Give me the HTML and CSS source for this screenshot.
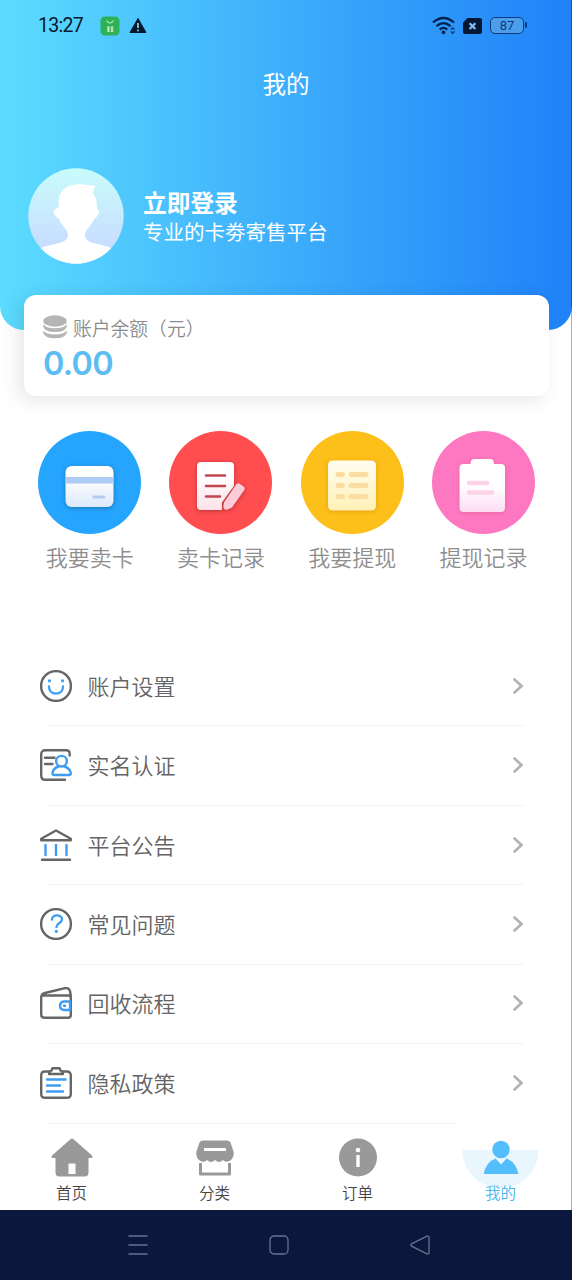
FILE: index.html
```
<!DOCTYPE html>
<html lang="zh-CN">
<head>
<meta charset="utf-8">
<title>我的</title>
<link rel="stylesheet" href="styles.css">
</head>
<body>
<div class="phone">
  <header class="header">
    <div class="status">
      <span class="clock">13:27</span>
      <svg class="app-icon" width="20" height="20" viewBox="0 0 20 20"><rect x=".5" y=".5" width="19" height="19" rx="4.5" fill="#2fb257"/><path d="M6.500 4.500Q10 9.500 13.500 4.500" fill="none" stroke="#b9f0b4" stroke-width="1.200"/><path d="M7 11.200h2.700M10.600 11.200h2.700M7 13.200h2.700M10.600 13.200h2.700M7 15.200h2.700M10.600 15.200h2.700M8.400 10.500v5.500M12 10.500v5.500" stroke="#d9f7cf"/></svg>
      <svg class="warn-icon" width="18" height="17" viewBox="0 0 18 17"><path d="M9 1.500L17 15.500H1z" fill="#06182b" stroke="#06182b" stroke-linejoin="round"/><path d="M9 6v5M9 12.500v1.800" stroke="#8fd0f2" stroke-width="1.700"/></svg>
      <div class="status-right">
        <svg width="24" height="20" viewBox="0 0 24 20"><g fill="none" stroke="#061f4b" stroke-width="2.300"><path d="M1 6.500Q11.500-2.500 22 6.500"/><path d="M4.500 10.200Q11.500 4 18.500 10.200"/><path d="M7.700 13.600Q11.500 10.200 15.300 13.600"/></g><circle cx="11.500" cy="16.400" r="1.800" fill="#061f4b"/><path d="M18 13.500L20.700 10.800 23.400 13.500zM18 15.500L20.700 18.200 23.400 15.500z" fill="#123a78"/></svg>
        <svg class="sim" width="19" height="16" viewBox="0 0 19 16"><path d="M4.500 0H17q2 0 2 2V14q0 2-2 2H2Q0 16 0 14V4.500z" fill="#061733"/><path d="M6.600 5.200l5.800 5.800M12.400 5.200L6.600 11" stroke="#84bdf6" stroke-width="2.200"/></svg>
        <span class="battery">87</span>
      </div>
    </div>
    <h1 class="title">我的</h1>
    <div class="profile">
      <svg width="96" height="96" viewBox="0 0 96 96"><defs><linearGradient id="av" x1="0" y1="0" x2="0" y2="1"><stop offset="0" stop-color="#c8fcfb"/><stop offset=".85" stop-color="#c8dcff"/></linearGradient><clipPath id="avc"><circle cx="48" cy="48" r="47.700"/></clipPath></defs><g clip-path="url(#avc)"><rect width="96" height="96" fill="url(#av)"/><path d="M31 36C29 24 38 17 48 16.500C56 15.500 62 18.500 67 17C67 21 65 24 64.500 25C69 29 69 36 69 41C73 42 71 48 66 51C63 59 57 61 57 67C57 77 75 75 85 81V97H11V81C22 75 40 77 40 67C40 61 34 59 31 51C26 48 23 42 28 41C30 40 31 39 31 36Z" fill="#fff"/></g></svg>
      <div class="profile-text">
        <div class="login">立即登录</div>
        <div class="slogan">专业的卡劵寄售平台</div>
      </div>
    </div>
  </header>

  <section class="balance">
    <div class="balance-label">
      <svg width="24" height="24" viewBox="0 0 24 24" fill="#b5b5b5"><ellipse cx="12" cy="6" rx="11.700" ry="5.700"/><path d="M.3 9.200Q3 13.300 12 13.300T23.700 9.200V12Q22 17 12 17T.3 12zM.3 15.500Q3 19.500 12 19.500T23.700 15.500V18Q22 23.300 12 23.300T.3 18z"/></svg>
      <span>账户余额（元）</span>
    </div>
    <div class="amount">0.00</div>
  </section>

  <nav class="actions">
    <a class="action">
      <svg width="103" height="103" viewBox="0 0 103 103"><defs><linearGradient id="w1" x1="0" y1="0" x2="0" y2="1"><stop offset=".3" stop-color="#fff"/><stop offset="1" stop-color="#dce8fb"/></linearGradient></defs><circle cx="51.500" cy="51.500" r="51.500" fill="#25a5fd"/><g class="lift"><rect x="27.500" y="35" width="48" height="41" rx="6" fill="url(#w1)"/></g><path d="M27.500 46h48v6.500h-48z" fill="#b0cbf4"/><path d="M56 66h10" stroke="#b0cbee" stroke-width="3" stroke-linecap="round"/></svg>
      <span>我要卖卡</span>
    </a>
    <a class="action">
      <svg width="103" height="103" viewBox="0 0 103 103"><defs><linearGradient id="w2" x1="0" y1="0" x2="0" y2="1"><stop offset=".3" stop-color="#fff"/><stop offset="1" stop-color="#fde1e8"/></linearGradient></defs><circle cx="51.500" cy="51.500" r="51.500" fill="#ff4d50"/><g class="lift"><path d="M32 31h29q4 0 4 4V55L53 71.500V79H32q-4 0-4-4V35q0-4 4-4z" fill="url(#w2)"/></g><path class="lift" d="M67.500 53Q66 55 55 71.500L54.300 76Q55 79.500 58 78.700L63 76.500 75.300 59Q76.500 56.500 74 55L71 53Q69 51.700 67.500 53z" fill="#ffcbd8"/><path d="M37 44.500h19M37 55h19M37 65.500h14" stroke="#c34550" stroke-width="2.600" stroke-linecap="round"/></svg>
      <span>卖卡记录</span>
    </a>
    <a class="action">
      <svg width="103" height="103" viewBox="0 0 103 103"><defs><linearGradient id="w3" x1="0" y1="0" x2="0" y2="1"><stop offset="0" stop-color="#fffdf1"/><stop offset="1" stop-color="#fff1b7"/></linearGradient></defs><circle cx="51.500" cy="51.500" r="51.500" fill="#fdbf19"/><g class="lift-soft"><rect x="27" y="29.500" width="48" height="50" rx="4.500" fill="url(#w3)"/></g><path d="M37 43.500h4.500M50 43.500h15M37 54.500h4.500M50 54.500h15M37 65.500h4.500M50 65.500h15" stroke="#fcdda1" stroke-width="5" stroke-linecap="round"/></svg>
      <span>我要提现</span>
    </a>
    <a class="action">
      <svg width="103" height="103" viewBox="0 0 103 103"><defs><linearGradient id="w4" x1="0" y1="0" x2="0" y2="1"><stop offset=".5" stop-color="#fff"/><stop offset="1" stop-color="#fddcf3"/></linearGradient></defs><circle cx="51.500" cy="51.500" r="51.500" fill="#fd78c1"/><g class="lift-soft"><path d="M31.500 33h7q0-5 4-5H58q4 0 4 5h7q4 0 4 4V77q0 4-4 4H31.500q-4 0-4-4V37q0-4 4-4z" fill="url(#w4)"/></g><path d="M37 52h18M37 61.500h23" stroke="#fcd3e7" stroke-width="4.500" stroke-linecap="round"/></svg>
      <span>提现记录</span>
    </a>
  </nav>

  <main class="menu">
    <div class="row">
      <svg class="icon" viewBox="0 0 32 32"><circle cx="16" cy="16" r="14.900"/><path class="blue" d="M9 16.500C9 26 23 26 23 16.500"/><path class="blue dot" d="M9.500 10.800h.01M22.500 10.800h.01"/></svg>
      <span>账户设置</span><svg class="chev" viewBox="0 0 10 16"><path d="M1.500 1.500L8.500 8 1.500 14.500"/></svg>
    </div>
    <div class="row">
      <svg class="icon" viewBox="0 0 32 32"><path d="M29.700 6.500V5Q29.700 1.200 26 1.200H5.500Q1.200 1.200 1.200 5.500V26.500Q1.200 30.800 5.500 30.800H25M5 8.800h9.500M5 15h7.500"/><circle class="blue" cx="21.500" cy="12.200" r="5.300"/><path class="blue" d="M18.500 17.500Q13 19.500 12.500 24Q12.500 26 14.500 26H29Q31 26 30.800 24Q30 19.500 24.500 17.500"/></svg>
      <span>实名认证</span><svg class="chev" viewBox="0 0 10 16"><path d="M1.500 1.500L8.500 8 1.500 14.500"/></svg>
    </div>
    <div class="row">
      <svg class="icon" viewBox="0 0 32 32"><path d="M1.200 11.200V9.700L16 1.500 30.800 9.700V11.200zM2 30.800H30"/><path class="blue" d="M5.500 16V26M16 16V26M26.500 16V26"/></svg>
      <span>平台公告</span><svg class="chev" viewBox="0 0 10 16"><path d="M1.500 1.500L8.500 8 1.500 14.500"/></svg>
    </div>
    <div class="row">
      <svg class="icon" viewBox="0 0 32 32"><circle cx="16" cy="16" r="14.900"/><path class="blue" d="M12 11.500C12 6 22 6 22 11.500C22 15 16.500 15 16.500 19"/><path class="blue dot" d="M16.300 23.300h.01"/></svg>
      <span>常见问题</span><svg class="chev" viewBox="0 0 10 16"><path d="M1.500 1.500L8.500 8 1.500 14.500"/></svg>
    </div>
    <div class="row">
      <svg class="icon" viewBox="0 0 32 32"><path d="M1.200 10.500Q1.200 7 5 6L25 1.200Q29 .5 30 4L30.800 9V28Q30.800 30.800 28 30.800H4.500Q1.200 30.800 1.200 27.500zM2 8.500H28.500Q30.800 8.500 30.800 11"/><path class="blue" d="M30 14.500H24Q20 15 20 18.700T24 23H30V14.500"/><path class="blue" d="M24 18.700H25"/></svg>
      <span>回收流程</span><svg class="chev" viewBox="0 0 10 16"><path d="M1.500 1.500L8.500 8 1.500 14.500"/></svg>
    </div>
    <div class="row">
      <svg class="icon" viewBox="0 0 32 32"><path d="M9.500 4.500H5Q1.200 4.500 1.200 8.500V27Q1.200 30.800 5 30.800H27Q30.800 30.800 30.800 27V8.500Q30.800 4.500 27 4.500H22.500M9 7Q9.500 4.500 11.500 3.500L12.500 1.200H19.500L20.500 3.500Q22.500 4.500 23 7z"/><path class="blue" d="M7 12.500H25.500M7 18.500H20M7 24.500H23"/></svg>
      <span>隐私政策</span><svg class="chev" viewBox="0 0 10 16"><path d="M1.500 1.500L8.500 8 1.500 14.500"/></svg>
    </div>
  </main>

  <footer class="tabs">
    <a class="tab">
      <svg width="42" height="40" viewBox="0 0 42 40" fill="#999"><path d="M19.500 1.200Q21 0 22.500 1.200L41 17.500Q42.500 20 40 20H37.500V34.500Q37.500 38.500 33.500 38.500H8.500Q4.500 38.500 4.500 34.500V20H2Q-.5 20 1 17.500z"/><path d="M17.500 25.500h7V36h-7z" fill="#fff"/></svg>
      <span>首页</span>
    </a>
    <a class="tab">
      <svg width="42" height="40" viewBox="0 0 42 40"><path d="M9 2.500H33Q35.500 2.500 36.500 4.500L39.700 14C40.500 22 33 26.500 29 22Q25 26 21 22Q17 26 13 22C9 26.500 1.500 22 2.300 14L5.500 4.500Q6.500 2.500 9 2.500z" fill="#999"/><path d="M10 11.500H32" stroke="#fff" stroke-width="3"/><path d="M6.500 25V36H35.500V25" fill="none" stroke="#999" stroke-width="3" stroke-linejoin="round"/></svg>
      <span>分类</span>
    </a>
    <a class="tab">
      <svg width="42" height="40" viewBox="0 0 42 40"><circle cx="21" cy="19.500" r="19" fill="#999"/><circle cx="21" cy="12" r="2.300" fill="#fff"/><path d="M19.300 17h3.400V29h-3.400z" fill="#fff"/></svg>
      <span>订单</span>
    </a>
    <a class="tab active">
      <svg width="76" height="40" viewBox="0 0 76 40"><circle cx="38" cy="11.500" r="8.700" fill="#54bdfc"/><path d="M20.700 36Q23 24 32.500 20.500L38 26.500 43.500 20.500Q53 24 55.500 36z" fill="#54bdfc"/></svg>
      <span>我的</span>
    </a>
  </footer>

  <div class="sysnav">
    <svg width="20" height="20" viewBox="0 0 20 20"><path d="M.5 1H19.500M.5 10H19.500M.5 19H19.500"/></svg>
    <svg width="20" height="20" viewBox="0 0 20 20"><rect x="1" y="1" width="18" height="18" rx="4"/></svg>
    <svg width="20" height="20" viewBox="0 0 20 20"><path d="M1.500 8.800L17 1.200Q19 .5 19 2.800V17.200Q19 19.500 17 18.800L1.500 11.200Q.2 10 1.500 8.800z"/></svg>
  </div>
</div>
</body>
</html>
```
FILE: styles.css
```
* { box-sizing: border-box; }
body {
  margin: 0;
  background: #fff;
  font-family: "Noto Sans CJK SC", "Noto Sans", sans-serif;
  font-weight: 350;
}
svg { display: block; flex: none; }
.phone {
  position: relative;
  width: 572px;
  height: 1280px;
  display: flex;
  flex-direction: column;
  overflow: hidden;
}
.phone::after {
  content: "";
  position: absolute;
  top: 0;
  right: 0;
  width: 1px;
  height: 1210px;
  background: rgba(0, 0, 0, .32);
}
.header {
  height: 330px;
  flex: none;
  border-radius: 0 0 24px 24px;
  background: linear-gradient(90deg, #5cdcff 0%, #3cacfb 52%, #1f82f8 100%);
  color: #fff;
}
.status {
  height: 51px;
  display: flex;
  align-items: center;
  padding: 0 48px 0 38px;
  color: #06182b;
}
.clock {
  width: 62px;
  font: 400 19.500px/22px Roboto, sans-serif;
  letter-spacing: -.7px;
}
.warn-icon { margin-left: 9px; }
.status-right {
  margin-left: auto;
  display: flex;
  align-items: center;
}
.sim { margin-left: 7px; }
.battery {
  position: relative;
  width: 34px;
  height: 17px;
  margin-left: 8px;
  border: 1.5px solid #0d397e;
  border-radius: 5px;
  background: #4d9eea;
  font: 400 13px/15px Roboto, sans-serif;
  color: #0d397e;
  text-align: center;
}
.battery::after {
  content: "";
  position: absolute;
  right: -4px;
  top: 4px;
  width: 2px;
  height: 6px;
  border-radius: 1px;
  background: #0d397e;
}
.title {
  margin: 0;
  height: 64px;
  font-size: 23.500px;
  line-height: 64px;
  font-weight: 400;
  text-align: center;
}
.profile {
  display: flex;
  margin-top: 53px;
  padding-left: 28px;
  gap: 19px;
}
.profile-text { padding-top: 19px; }
.login { font-size: 23.700px; line-height: 30px; font-weight: 700; }
.slogan { font-size: 20.500px; line-height: 28px; font-weight: 400; }
.balance {
  position: relative;
  flex: none;
  width: 525px;
  height: 101px;
  margin: -35px 0 0 24px;
  padding: 19px 19px 0;
  border-radius: 12px;
  background: #fff;
  box-shadow: -5px 4px 20px rgba(0, 0, 0, .1);
}
.balance-label {
  display: flex;
  align-items: center;
  height: 26px;
  gap: 6px;
  font-size: 18.800px;
  color: #8c8c8c;
}
.amount {
  margin-top: 2px;
  font: 600 32.500px/44px Inter, sans-serif;
  letter-spacing: -.7px;
  color: #5cbdf3;
}
.actions {
  flex: none;
  display: grid;
  grid-template-columns: repeat(4, 131.300px);
  margin: 35px 0 0 24px;
}
.action {
  display: flex;
  flex-direction: column;
  align-items: center;
  font-size: 22px;
  line-height: 32px;
  color: #8e8e8e;
}
.action span { margin-top: 6px; }
.lift { filter: drop-shadow(0 1px 2px rgba(0, 0, 0, .3)); }
.lift-soft { filter: drop-shadow(0 1px 2px rgba(120, 30, 0, .18)); }
.menu {
  flex: none;
  margin: 74px 47px 0 39px;
}
.row {
  position: relative;
  display: flex;
  align-items: center;
  height: 79.450px;
  padding-right: 2.500px;
  padding-left: .5px;
  font-size: 22px;
  color: #646464;
}
.row::after {
  content: "";
  position: absolute;
  left: 9px;
  right: 0;
  bottom: -1px;
  height: 1px;
  background: #f4f4f4;
}
.row:last-child::after { right: 69px; }
.row span { margin: 0 0 2px 16px; }
.icon {
  width: 32px;
  height: 32px;
  fill: none;
  stroke: #666;
  stroke-width: 2.400;
  stroke-linecap: round;
  stroke-linejoin: round;
}
.icon .blue { stroke: #3d9df2; }
.icon .dot { stroke-width: 3.200; }
.chev {
  margin-left: auto;
  width: 10px;
  height: 16px;
  fill: none;
  stroke: #b2b2b2;
  stroke-width: 2.600;
  stroke-linecap: round;
}
.tabs {
  flex: none;
  display: grid;
  grid-template-columns: repeat(4, 143px);
  height: 86px;
}
.tab {
  display: flex;
  flex-direction: column;
  align-items: center;
  padding-top: 15.500px;
  font-size: 15.500px;
  line-height: 24px;
  color: #444;
}
.tab span { margin-top: 2px; }
.tab.active {
  color: #4bb6ec;
  background: radial-gradient(circle at 50% 0, #e9f6fd 37.500px, transparent 38.500px) 0 27px / 143px 59px no-repeat;
}
.sysnav {
  height: 70px;
  margin-top: auto;
  flex: none;
  display: flex;
  align-items: center;
  gap: 121px;
  padding-left: 128px;
  background: #0c173d;
}
.sysnav svg {
  fill: none;
  stroke: #68718f;
  stroke-width: 1.300;
}
```
